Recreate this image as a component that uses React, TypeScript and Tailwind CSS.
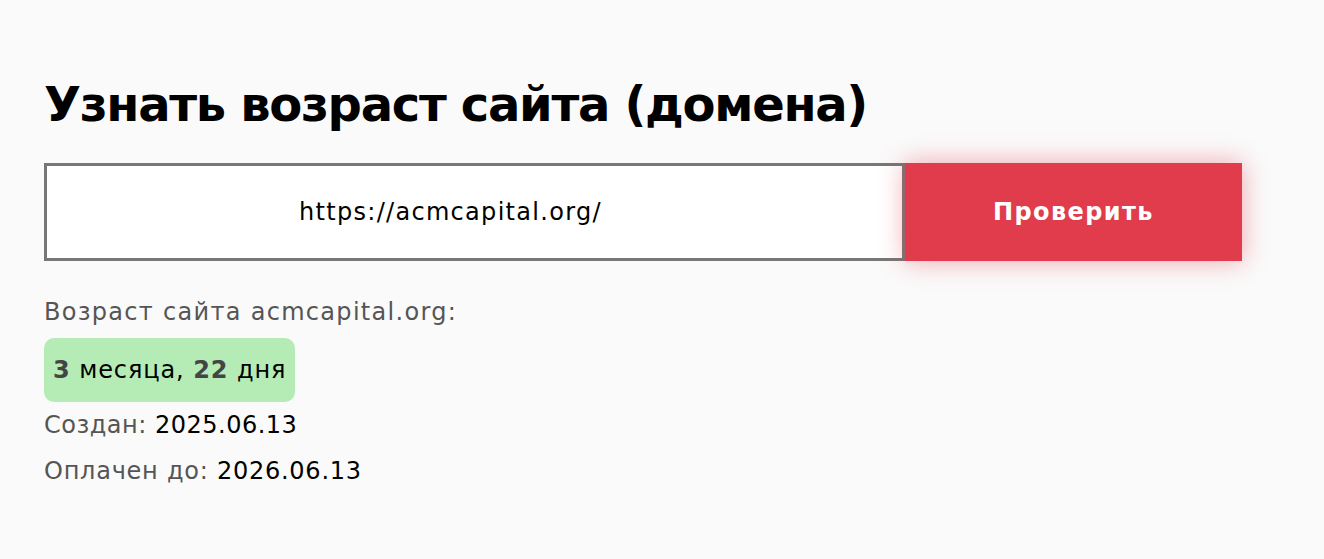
export default function App() {
  return (
    <div className="min-h-[559px] w-full bg-[#fafafa] pl-[44px] pt-[73px]" style={{ fontFamily: '"DejaVu Sans", "Noto Sans", sans-serif' }}>
      <h1 className="text-[48px] font-bold leading-[62px] tracking-[-1.3px] text-black">Узнать возраст сайта (домена)</h1>
      <div className="mt-[28px] flex w-[1198px]">
        <div className="flex h-[98px] w-[861px] items-center border-[3px] border-[#777777] bg-white pl-[252px]">
          <span className="text-[24px] tracking-[1.3px] text-black">https://acmcapital.org/</span>
        </div>
        <button className="flex h-[98px] w-[337px] items-center justify-center bg-[#e03c4c] text-[24px] font-bold tracking-[1.4px] text-white shadow-[0_0_24px_rgba(230,60,76,0.45)]">
          Проверить
        </button>
      </div>
      <div className="mt-[36px] text-[24px] leading-[30px] tracking-[1.3px] text-[#555555]">Возраст сайта acmcapital.org:</div>
      <div className="mt-[11px] inline-flex h-[64px] items-center rounded-[10px] bg-[#b5ebb5] px-[9px] text-[24px] tracking-[0.9px] text-black">
        <b className="text-[#444444]">3</b>&nbsp;месяца,&nbsp;<b className="text-[#444444]">22</b>&nbsp;дня
      </div>
      <div className="mt-[5px] text-[24px] leading-[36px] tracking-[0.5px] text-[#555555]">
        Создан: <span className="text-black">2025.06.13</span>
      </div>
      <div className="mt-[10px] text-[24px] leading-[36px] tracking-[0.75px] text-[#555555]">
        Оплачен до: <span className="text-black">2026.06.13</span>
      </div>
    </div>
  );
}
